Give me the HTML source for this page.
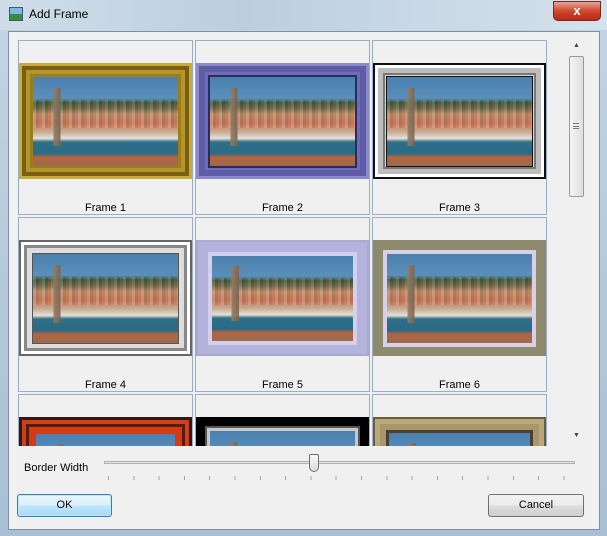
<!DOCTYPE html>
<html style="overflow:hidden"><head><style>
*{margin:0;padding:0;box-sizing:border-box}
html,body{width:607px;height:536px;overflow:hidden}
body{position:relative;font-family:"Liberation Sans",sans-serif;font-size:11px;color:#000;
background:linear-gradient(180deg,#d6e3ee 0,#c3d3e2 30px,#a9bfd3 100%);}
.abs{position:absolute}
#client{left:8px;top:31px;width:592px;height:499px;background:#f0f0f0;border:1px solid #7d8fa3}
.cell{position:absolute;width:175px;height:175px;border:1px solid #9aaec6;background:#f0f0f0;overflow:hidden}
.lbl{position:absolute;left:0;right:0;top:161px;text-align:center;font-size:11px}
.fr{position:absolute;left:0;top:22px;width:173px;height:116px}
.ph{position:absolute;left:14px;top:14px;right:14px;bottom:13px;
background:
linear-gradient(90deg,transparent 14%,rgba(150,125,100,.9) 14%,rgba(120,100,80,.9) 19%,transparent 19%) 0 35%/100% 65% no-repeat,
repeating-linear-gradient(90deg,rgba(255,255,255,.12) 0 3px,rgba(0,0,0,.1) 3px 6px,rgba(200,80,40,.15) 6px 9px) 0 38%/100% 32% no-repeat,
linear-gradient(180deg,#4a80af 0,#5b8fbb 24%,#3f5c3c 29%,#6a6a4a 35%,#c0906e 42%,#c9795a 52%,#c8ae96 62%,#e5e0d8 69%,#2f6f88 73%,#2a6a86 86%,#b5643e 90%,#9a6a50 100%)}
.scroll{left:568px;top:36px;width:17px;height:410px;background:#f0f0f0}
.btn{position:absolute;height:23px;border:1px solid #707070;border-radius:3px;text-align:center;line-height:21px;font-size:11px;
background:linear-gradient(#f2f2f2 0,#ebebeb 50%,#dddddd 51%,#cfcfcf 100%)}
</style></head><body>
<div class="abs" style="left:0;top:0;width:607px;height:30px;background:linear-gradient(90deg,#cfdde9,#bccfdf 40%,#d5e1ec)"></div>
<div class="abs" style="left:9px;top:7px;width:14px;height:14px;background:linear-gradient(#7fb7e6 50%,#3a8a3a 50%);border:1px solid #3a5a7a"></div>
<div class="abs" style="left:29px;top:7px;font-size:12px">Add Frame</div>
<div class="abs" style="left:553px;top:1px;width:48px;height:20px;border-radius:0 0 5px 5px;border:1px solid #6b2a22;background:linear-gradient(#e8a598,#d0462e 50%,#b82a14);color:#fff;text-align:center;font-weight:bold;font-size:13px;line-height:18px">x</div>
<div id="client" class="abs"></div>

<div class="abs" style="left:18px;top:40px;width:531px;height:406px;overflow:hidden">
 <div class="cell" style="left:0;top:0"><div class="fr" style="background:#9c7d1c;border:3px solid #c8ad3a;box-shadow:inset 0 0 0 4px #7a5f10,inset 0 0 0 8px #b3952e"><div class="ph" style="left:11px;top:11px;right:11px;bottom:10px"></div></div><div class="lbl">Frame 1</div></div>
 <div class="cell" style="left:177px;top:0"><div class="fr" style="background:#6e6cb4;border:3px solid #8b89c8;box-shadow:inset 0 0 0 6px #5e5ca6"><div class="ph" style="left:11px;top:11px;right:11px;bottom:10px;outline:2px solid #2c2a60"></div></div><div class="lbl">Frame 2</div></div>
 <div class="cell" style="left:354px;top:0"><div class="fr" style="background:#d8d8d8;border:2px solid #111;box-shadow:inset 0 0 0 3px #fff,inset 0 0 0 8px #bdbdbd,inset 0 0 0 10px #777"><div class="ph" style="left:12px;top:12px;right:12px;bottom:11px;outline:1px solid #111"></div></div><div class="lbl">Frame 3</div></div>
 <div class="cell" style="left:0;top:177px"><div class="fr" style="background:#e0e0e0;border:2px solid #666;box-shadow:inset 0 0 0 3px #fff,inset 0 0 0 6px #888,inset 0 0 0 9px #ddd"><div class="ph" style="left:12px;top:12px;right:12px;bottom:11px;outline:1px solid #555"></div></div><div class="lbl">Frame 4</div></div>
 <div class="cell" style="left:177px;top:177px"><div class="fr" style="background:#b3b3dc;border:2px solid #a9a9d4"><div class="ph" style="outline:4px solid #d4cfea"></div></div><div class="lbl">Frame 5</div></div>
 <div class="cell" style="left:354px;top:177px"><div class="fr" style="background:#8e8a6e"><div class="ph" style="outline:4px solid #d8d0e6"></div></div><div class="lbl">Frame 6</div></div>
 <div class="cell" style="left:0;top:354px"><div class="fr" style="background:#d43a14;border:3px solid #3a1410;box-shadow:inset 0 0 0 4px #c8421c,inset 0 0 0 7px #5a1a10"><div class="ph" style="left:14px;top:14px"></div></div></div>
 <div class="cell" style="left:177px;top:354px"><div class="fr" style="background:#000;box-shadow:inset 0 0 0 9px #000,inset 0 0 0 13px #555"><div class="ph" style="outline:3px solid #c8c8c8"></div></div></div>
 <div class="cell" style="left:354px;top:354px"><div class="fr" style="background:#a8976a;border:2px solid #6a5e40;box-shadow:inset 0 0 0 5px #b9a87a"><div class="ph" style="outline:3px solid #4a4030"></div></div></div>
</div>

<div class="abs scroll"></div>
<div class="abs" style="left:573px;top:42px;font-size:7px;color:#444">▲</div>
<div class="abs" style="left:569px;top:56px;width:15px;height:141px;border:1px solid #9a9a9a;border-radius:2px;background:linear-gradient(90deg,#f4f4f4,#dedede)"></div>
<div class="abs" style="left:573px;top:123px;width:6px;height:6px;border-top:1px solid #777;border-bottom:1px solid #777"><div style="margin-top:2px;height:1px;background:#777"></div></div>
<div class="abs" style="left:573px;top:432px;font-size:7px;color:#444">▼</div>

<div class="abs" style="left:24px;top:462px">Border Width</div>
<div class="abs" style="left:104px;top:461px;width:471px;height:3px;border:1px solid #b0b0b0;background:#e6e6e6"></div>
<div class="abs" style="left:309px;top:454px;width:10px;height:18px;border:1px solid #707070;border-radius:2px 2px 5px 5px;background:linear-gradient(#fafafa,#dadada)"></div>
<div class="abs" style="left:108px;top:476px;width:467px;height:4px;background:repeating-linear-gradient(90deg,#a0a0a0 0 1px,transparent 1px 25.3px)"></div>

<div class="btn" style="left:17px;top:494px;width:95px;border-color:#3c7fb1;background:linear-gradient(#eaf6fd 0,#d9f0fc 50%,#bee6fd 51%,#a7d9f5 100%);box-shadow:inset 0 0 0 1px #b8e6fb">OK</div>
<div class="btn" style="left:488px;top:494px;width:96px">Cancel</div>
</body></html>
